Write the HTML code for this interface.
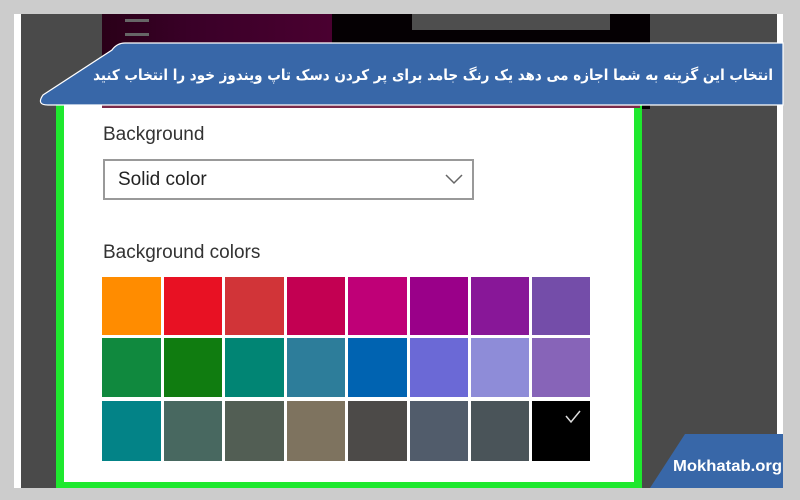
<!DOCTYPE html>
<html><head><meta charset="utf-8"><style>
body{margin:0;width:800px;height:500px;background:#cccccc;position:relative;overflow:hidden;font-family:"Liberation Sans",sans-serif}
div{position:absolute;box-sizing:border-box}
</style></head><body>
<div style="left:14px;top:14px;width:769px;height:474px;background:#fff"></div>
<div style="left:21px;top:14px;width:756px;height:474px;background:#4a4a4a"></div>
<div style="left:102px;top:14px;width:230px;height:95px;background:linear-gradient(90deg,#2a0018,#3a0028 40%,#4a0030)"></div>
<div style="left:332px;top:14px;width:318px;height:95px;background:#050003"></div>
<div style="left:412px;top:14px;width:198px;height:16px;background:#4e4e4e"></div>
<div style="left:125px;top:19px;width:24px;height:3px;background:#666"></div>
<div style="left:125px;top:33px;width:24px;height:3px;background:#666"></div>
<div style="left:56px;top:100px;width:586px;height:388px;background:#1ee82e"></div>
<div style="left:64px;top:100px;width:570px;height:382px;background:#fff"></div>
<div style="left:102px;top:104px;width:538px;height:4px;background:#7a2a4a"></div>
<div style="left:103px;top:124px;font-size:19px;color:#333">Background</div>
<div style="left:103px;top:159px;width:371px;height:41px;border:2px solid #999;background:#fff"></div>
<div style="left:118px;top:169px;font-size:19px;color:#222">Solid color</div>
<svg style="position:absolute;left:445px;top:173px" width="18" height="12"><path d="M1 2 L9 10 L17 2" fill="none" stroke="#666" stroke-width="1.5"/></svg>
<div style="left:103px;top:242px;font-size:19px;color:#333">Background colors</div>
<svg style="position:absolute;left:0;top:0" width="800" height="500">
<g>
<rect x="102" y="277" width="59" height="58" fill="#ff8c00"/><rect x="164" y="277" width="58" height="58" fill="#e81123"/><rect x="225" y="277" width="59" height="58" fill="#d13438"/><rect x="287" y="277" width="58" height="58" fill="#c30052"/><rect x="348" y="277" width="59" height="58" fill="#bf0077"/><rect x="410" y="277" width="58" height="58" fill="#9a0089"/><rect x="471" y="277" width="58" height="58" fill="#881798"/><rect x="532" y="277" width="58" height="58" fill="#744da9"/>
<rect x="102" y="338" width="59" height="59" fill="#10893e"/><rect x="164" y="338" width="58" height="59" fill="#107c10"/><rect x="225" y="338" width="59" height="59" fill="#018574"/><rect x="287" y="338" width="58" height="59" fill="#2d7d9a"/><rect x="348" y="338" width="59" height="59" fill="#0063b1"/><rect x="410" y="338" width="58" height="59" fill="#6b69d6"/><rect x="471" y="338" width="58" height="59" fill="#8e8cd8"/><rect x="532" y="338" width="58" height="59" fill="#8764b8"/>
<rect x="102" y="401" width="59" height="60" fill="#038387"/><rect x="164" y="401" width="58" height="60" fill="#486860"/><rect x="225" y="401" width="59" height="60" fill="#525e54"/><rect x="287" y="401" width="58" height="60" fill="#7e735f"/><rect x="348" y="401" width="59" height="60" fill="#4c4a48"/><rect x="410" y="401" width="58" height="60" fill="#515c6b"/><rect x="471" y="401" width="58" height="60" fill="#4a5459"/><rect x="532" y="401" width="58" height="60" fill="#000"/>
<path d="M566 416 L571 422 L580 411" fill="none" stroke="#ddd" stroke-width="1.5"/>
</g>
<path d="M125 43 L783 43 L783 105 L48 105 Q36 105 43 95 L112 50 Q117 43 125 43 Z" fill="#3867a8" stroke="#fff" stroke-width="1.2"/>
<path d="M685 434 L783 434 L783 488 L650 488 Z" fill="#3867a8"/>
<text x="673" y="471" font-family="'Liberation Sans',sans-serif" font-size="16" font-weight="bold" fill="#fff" textLength="109" lengthAdjust="spacingAndGlyphs">Mokhatab.org</text>
</svg>
<div style="right:27px;top:63px;width:800px;text-align:right;direction:rtl;white-space:nowrap;font-family:'DejaVu Sans',sans-serif;font-size:15px;font-weight:bold;color:#fff;line-height:24px;transform:scaleX(0.9);transform-origin:right center">انتخاب این گزینه به شما اجازه می دهد یک رنگ جامد برای پر کردن دسک تاپ ویندوز خود را انتخاب کنید</div>
</body></html>
